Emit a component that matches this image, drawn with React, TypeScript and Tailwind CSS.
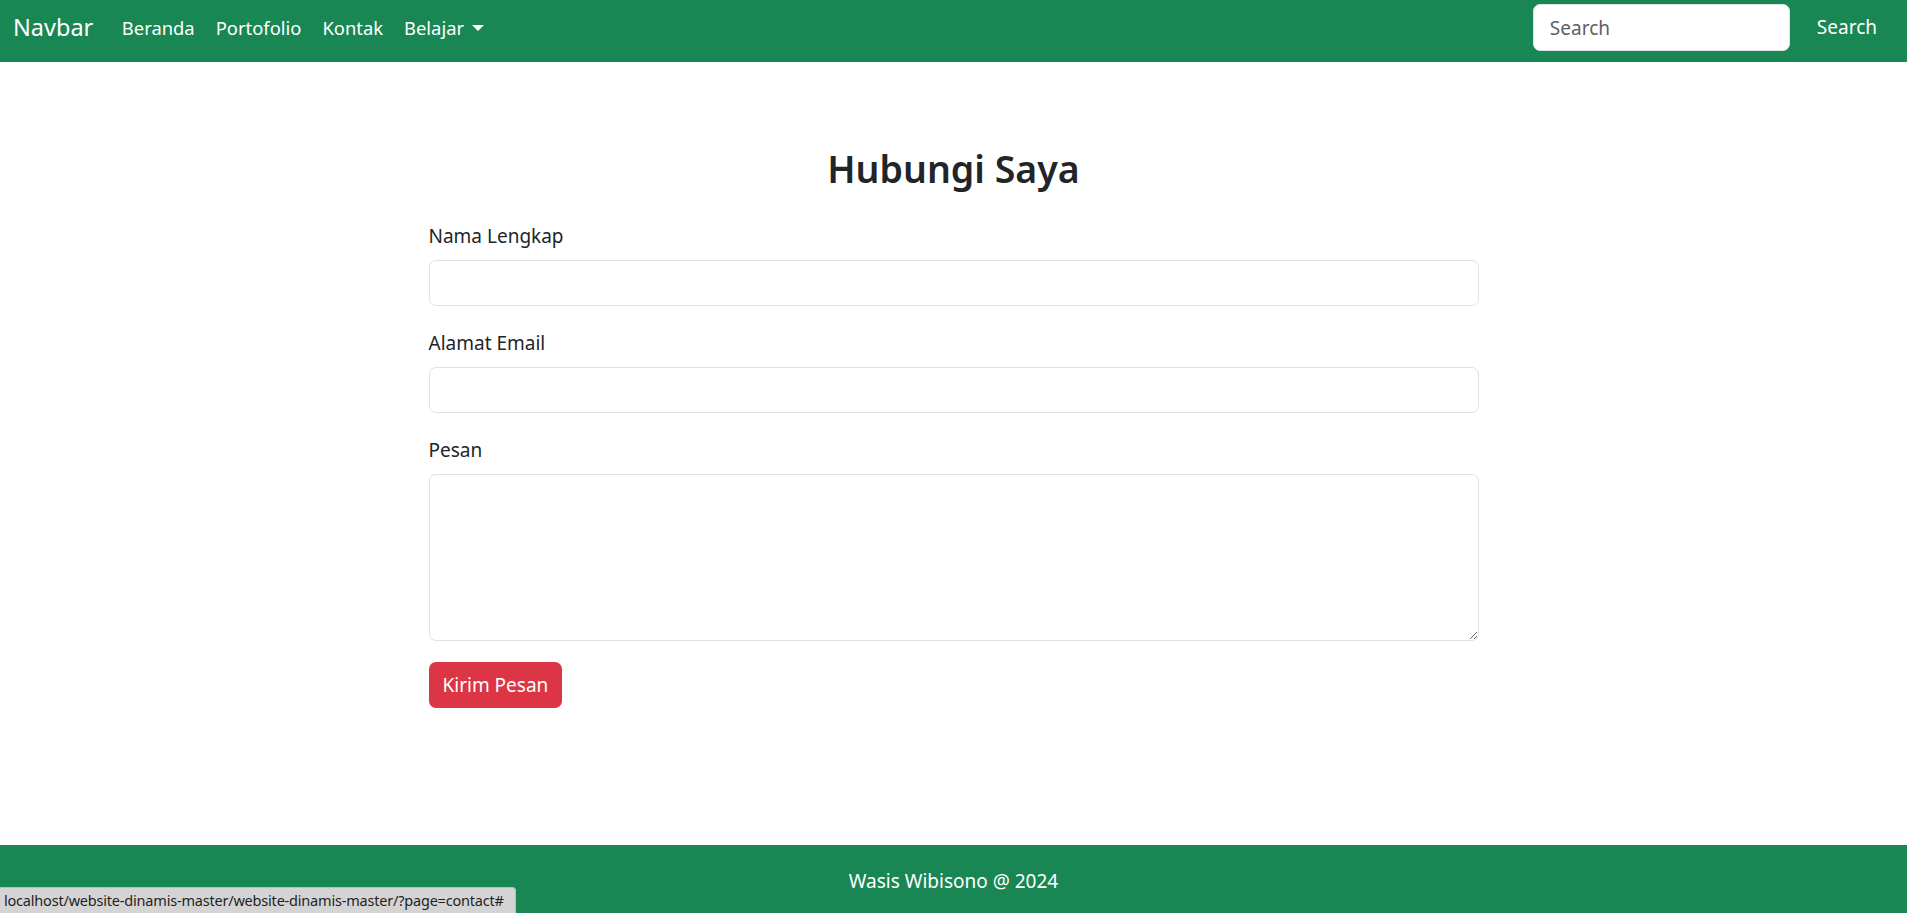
import React from "react";

export default function App() {
  const font = { fontFamily: '"Noto Sans", "Open Sans", sans-serif' };
  return (
    <div className="min-h-screen flex flex-col bg-white text-[#212529]" style={font}>
      <nav className="h-[62px] bg-[#198754] flex items-start pt-[4px] px-[13px] shrink-0">
        <a href="#" className="h-[47px] flex items-center text-white text-[23.5px] mr-[18px]">Navbar</a>
        <ul className="flex items-center h-[47px]">
          <li><a href="#" className="px-[10.5px] text-white text-[18.4px]">Beranda</a></li>
          <li><a href="#" className="px-[10.5px] text-white text-[18.4px]">Portofolio</a></li>
          <li><a href="#" className="px-[10.5px] text-white text-[18.4px]">Kontak</a></li>
          <li>
            <a href="#" className="px-[10.5px] text-white text-[18.4px] flex items-center">
              Belajar
              <span className="ml-[8px] mt-[2px] w-0 h-0 border-l-[6px] border-r-[6px] border-t-[6px] border-l-transparent border-r-transparent border-t-white"></span>
            </a>
          </li>
        </ul>
        <div className="flex-1" />
        <form className="flex items-center h-[47px]" onSubmit={(e) => e.preventDefault()}>
          <input
            type="search"
            placeholder="Search"
            className="w-[257px] h-[47px] bg-white rounded-[7px] border border-[#dee2e6] px-[16px] text-[19px] text-[#212529] placeholder:text-[#5c6166] outline-none"
          />
          <button type="submit" className="ml-[10px] h-[47px] px-[17px] text-white text-[19px] rounded-[7px]">Search</button>
        </form>
      </nav>

      <main className="flex-1">
        <div className="w-[1050px] mx-auto pt-[83px]">
          <h1 className="text-center text-[37.5px] font-semibold leading-[48px] mb-[28px]">Hubungi Saya</h1>
          <form onSubmit={(e) => e.preventDefault()}>
            <div className="mb-[22px]">
              <label className="block text-[19px] leading-[30px] mb-[9px]">Nama Lengkap</label>
              <input type="text" className="block w-full h-[46px] rounded-[7px] border border-[#dee2e6] px-[15px] text-[19px] outline-none" />
            </div>
            <div className="mb-[22px]">
              <label className="block text-[19px] leading-[30px] mb-[9px]">Alamat Email</label>
              <input type="email" className="block w-full h-[46px] rounded-[7px] border border-[#dee2e6] px-[15px] text-[19px] outline-none" />
            </div>
            <div className="mb-[21px]">
              <label className="block text-[19px] leading-[30px] mb-[9px]">Pesan</label>
              <textarea className="block w-full h-[167px] rounded-[7px] border border-[#dee2e6] px-[15px] py-[8px] text-[19px] outline-none"></textarea>
            </div>
            <button type="submit" className="h-[46px] px-[14px] bg-[#dc3545] text-white text-[19px] rounded-[7px]">Kirim Pesan</button>
          </form>
        </div>
      </main>

      <footer className="h-[68px] shrink-0 bg-[#198754] text-white text-center text-[19px] leading-[24px] pt-[24px]">
        Wasis Wibisono @ 2024
      </footer>

      <div className="fixed bottom-0 left-0 h-[26px] w-[516px] bg-[#d4d4d4] border-t border-r border-[#bdbdbd] rounded-tr-[4px] flex items-center pl-[4px] text-[14.5px] text-[#1f1f1f] whitespace-nowrap overflow-hidden" style={{ fontFamily: '"Noto Sans", sans-serif', letterSpacing: "-0.2px" }}>
        localhost/website-dinamis-master/website-dinamis-master/?page=contact#
      </div>
    </div>
  );
}
